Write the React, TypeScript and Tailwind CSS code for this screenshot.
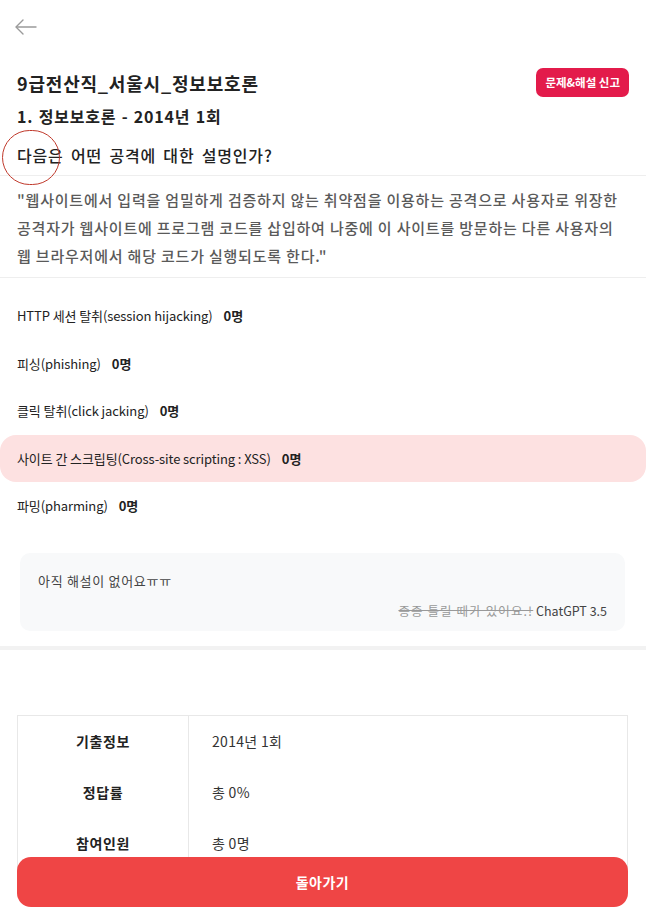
import React from "react";

const options = [
  { text: "HTTP 세션 탈취(session hijacking)", count: "0명", hl: false },
  { text: "피싱(phishing)", count: "0명", hl: false },
  { text: "클릭 탈취(click jacking)", count: "0명", hl: false },
  { text: "사이트 간 스크립팅(Cross-site scripting : XSS)", count: "0명", hl: true },
  { text: "파밍(pharming)", count: "0명", hl: false },
];

const rows = [
  { k: "기출정보", v: "2014년 1회" },
  { k: "정답률", v: "총 0%" },
  { k: "참여인원", v: "총 0명" },
];

export default function App() {
  return (
    <div
      className="relative min-h-screen w-full bg-white text-[#222] pb-[80px]"
      style={{ fontFamily: '"Noto Sans CJK KR", "Noto Sans", sans-serif' }}
    >
      {/* header */}
      <div className="h-[54px] flex items-center px-[15px]">
        <svg width="22" height="16" viewBox="0 0 22 16" fill="none" stroke="#9a9a9a" strokeWidth="1.4" strokeLinecap="round" strokeLinejoin="round">
          <path d="M21 8H1.5" />
          <path d="M8 1L1 8l7 7" />
        </svg>
      </div>

      {/* title */}
      <div className="mt-[14px] px-[17px] flex items-center justify-between h-[29px]">
        <h1 className="text-[18px] font-bold leading-[26px] tracking-[0.8px]">9급전산직_서울시_정보보호론</h1>
        <button className="h-[29px] px-[9px] rounded-[7px] bg-[#e31b4b] text-white text-[11.5px] font-bold leading-none">
          문제&amp;해설 신고
        </button>
      </div>

      <div className="mt-[7px] px-[17px] text-[16px] font-semibold leading-[24px] tracking-[0.8px] [word-spacing:1px]">
        1. 정보보호론 - 2014년 1회
      </div>

      <div className="mt-[15px] px-[17px] pb-[8px] text-[16px] font-medium leading-[24px] tracking-[0.8px] [word-spacing:3px] border-b border-[#eeeeee]">
        다음은 어떤 공격에 대한 설명인가?
      </div>

      <div className="px-[17px] pt-[10px] pb-[7px] text-[15px] font-medium leading-[28px] tracking-[0.8px] text-[#5a5a5a] border-b border-[#eeeeee]">
        "웹사이트에서 입력을 엄밀하게 검증하지 않는 취약점을 이용하는 공격으로 사용자로 위장한 공격자가 웹사이트에 프로그램 코드를 삽입하여 나중에 이 사이트를 방문하는 다른 사용자의 웹 브라우저에서 해당 코드가 실행되도록 한다."
      </div>

      {/* options */}
      <div className="pt-[14px] flex flex-col">
        {options.map((o) => (
          <div
            key={o.text}
            className={`h-[47.5px] flex items-center px-[17px] text-[13px] ${o.hl ? "bg-[#fde1e1] rounded-[16px]" : ""}`}
          >
            <span className="tracking-[-0.1px]">{o.text}</span>
            <span className="ml-[11px] font-bold">{o.count}</span>
          </div>
        ))}
      </div>

      {/* explanation */}
      <div className="mt-[23px] ml-[20px] mr-[21px] rounded-[10px] bg-[#f8f9fa] pt-[18px] pb-[10px] px-[18px]">
        <div className="text-[13px] leading-[20px] text-[#444] tracking-[0.7px]">아직 해설이 없어요ㅠㅠ</div>
        <div className="mt-[10px] text-right text-[12.5px] leading-[20px]">
          <span className="line-through text-[#999] tracking-[1.1px]">종종 틀릴 때가 있어요.!</span>
          <span className="text-[#444]"> ChatGPT 3.5</span>
        </div>
      </div>

      <div className="mt-[15px] h-[4px] bg-[#f2f2f2]" />

      {/* table */}
      <div className="mt-[65px] ml-[17px] mr-[18px] border border-[#e8e8e8]">
        {rows.map((r) => (
          <div key={r.k} className="flex h-[51px]">
            <div className="w-[171px] shrink-0 border-r border-[#e8e8e8] flex items-center justify-center text-[14px] font-bold tracking-[0.6px]">
              {r.k}
            </div>
            <div className="flex-1 flex items-center pl-[23px] text-[14px] text-[#333] tracking-[0.3px]">{r.v}</div>
          </div>
        ))}
      </div>

      {/* annotation circle */}
      <div className="absolute left-[2px] top-[130px] w-[58px] h-[55px] rounded-full border border-[#c0392b] pointer-events-none" />

      {/* fixed bottom button */}
      <div className="fixed left-[17px] right-[18px] bottom-[14px]">
        <button className="w-full h-[50px] rounded-[14px] bg-[#ef4545] text-white text-[14px] font-bold tracking-[0.5px]">
          돌아가기
        </button>
      </div>
    </div>
  );
}
